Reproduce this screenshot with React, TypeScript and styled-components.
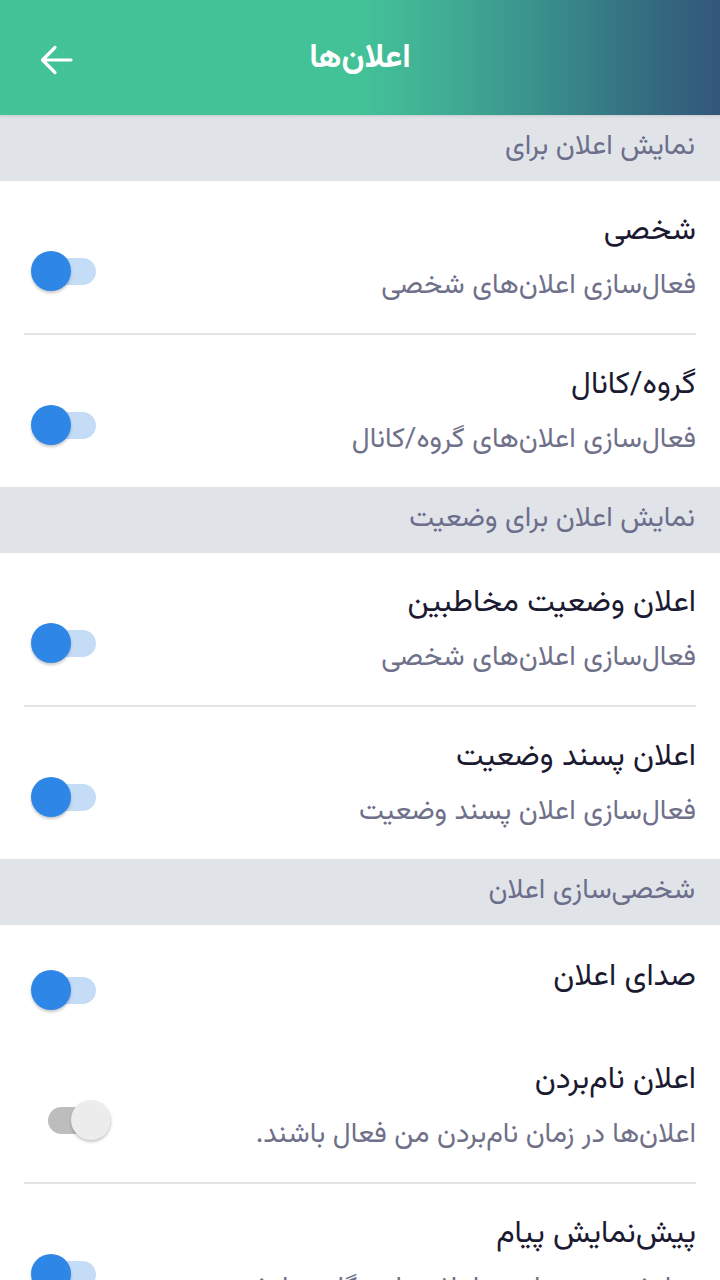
import React from "react";
import styled, { createGlobalStyle } from "styled-components";

const GlobalStyle = createGlobalStyle`
  html, body { margin: 0; padding: 0; background: #ffffff; }
  body { font-family: "Vazirmatn", "Noto Sans Arabic", "DejaVu Sans", sans-serif; overflow: hidden; }
  * { box-sizing: border-box; }
`;

const Page = styled.div`
  width: 720px;
  min-height: 1280px;
  background: #ffffff;
  direction: rtl;
`;

const Header = styled.header`
  position: relative;
  z-index: 1;
  height: 115px;
  display: flex;
  align-items: center;
  justify-content: center;
  direction: ltr;
  background: linear-gradient(90deg, #44c398 0%, #43c298 50%, #3fab93 63%, #398b8b 77%, #346e81 89%, #33567a 100%);
  box-shadow: 0 1px 3px rgba(0, 0, 0, 0.12);
`;

const BackButton = styled.button`
  position: absolute;
  left: 36px;
  top: 40px;
  width: 40px;
  height: 40px;
  padding: 0;
  border: 0;
  background: transparent;
  display: flex;
  align-items: center;
  justify-content: center;
`;

const HeaderTitle = styled.h1`
  margin: 0;
  color: #ffffff;
  font-size: 33px;
  font-weight: 700;
  direction: rtl;
  transform: translateY(1px);
`;

const SectionHeader = styled.div`
  height: 66px;
  background: #e0e4e9;
  display: flex;
  align-items: center;
  padding: 0 25px 2px;
  color: #6c6e8b;
  font-size: 28px;
`;

const Row = styled.div<{ $divider?: boolean; $compact?: boolean }>`
  display: flex;
  align-items: center;
  justify-content: space-between;
  margin: 0 24px;
  padding: 32px 0 ${(p) => (p.$compact ? "31px" : "29px")};
  border-bottom: ${(p) => (p.$divider ? "2px solid #e3e4e6" : "0")};
`;

const TextBlock = styled.div`
  display: flex;
  flex-direction: column;
  gap: 17px;
  min-width: 0;
`;

const Title = styled.div`
  color: #1b1a31;
  font-size: 31px;
  line-height: 38px;
  white-space: nowrap;
`;

const Subtitle = styled.div`
  color: #6f7089;
  font-size: 28px;
  line-height: 36px;
  white-space: nowrap;
`;

const SwitchBox = styled.div`
  position: relative;
  flex: 0 0 auto;
  width: 82px;
  height: 42px;
  margin: 12px 0 -12px 7px;
`;

const Track = styled.div<{ $on: boolean }>`
  position: absolute;
  top: 8px;
  left: ${(p) => (p.$on ? "1px" : "17px")};
  width: ${(p) => (p.$on ? "64px" : "63px")};
  height: 27px;
  border-radius: 14px;
  background: ${(p) => (p.$on ? "#c5dcf7" : "#bdbdbd")};
`;

const Thumb = styled.div<{ $on: boolean }>`
  position: absolute;
  top: 1px;
  left: ${(p) => (p.$on ? "0px" : "40px")};
  width: 40px;
  height: 40px;
  border-radius: 50%;
  background: ${(p) => (p.$on ? "#2e86e7" : "#ececec")};
  box-shadow: 0 2px 3px rgba(0, 0, 0, 0.22);
`;

const Switch = ({ on }: { on: boolean }) => (
  <SwitchBox>
    <Track $on={on} />
    <Thumb $on={on} />
  </SwitchBox>
);

type Item = { title: string; subtitle?: string; on: boolean; divider?: boolean };

const SettingRow = ({ title, subtitle, on, divider }: Item) => (
  <Row $divider={divider} $compact={!subtitle}>
    <TextBlock>
      <Title>{title}</Title>
      {subtitle && <Subtitle>{subtitle}</Subtitle>}
    </TextBlock>
    <Switch on={on} />
  </Row>
);

const ZW = "\u200c";

const sections: { header: string; items: Item[] }[] = [
  {
    header: "نمایش اعلان برای",
    items: [
      { title: "شخصی", subtitle: `فعال${ZW}سازی اعلان${ZW}های شخصی`, on: true, divider: true },
      { title: "گروه/کانال", subtitle: `فعال${ZW}سازی اعلان${ZW}های گروه/کانال`, on: true },
    ],
  },
  {
    header: "نمایش اعلان برای وضعیت",
    items: [
      { title: "اعلان وضعیت مخاطبین", subtitle: `فعال${ZW}سازی اعلان${ZW}های شخصی`, on: true, divider: true },
      { title: "اعلان پسند وضعیت", subtitle: `فعال${ZW}سازی اعلان پسند وضعیت`, on: true },
    ],
  },
  {
    header: `شخصی${ZW}سازی اعلان`,
    items: [
      { title: "صدای اعلان", on: true },
      {
        title: `اعلان نام${ZW}بردن`,
        subtitle: `اعلان${ZW}ها در زمان نام${ZW}بردن من فعال باشند.`,
        on: false,
        divider: true,
      },
      { title: `پیش${ZW}نمایش پیام`, subtitle: `نمایش متن پیام در اعلان${ZW}ها هنگام نمایش`, on: true },
    ],
  },
];

export default function App() {
  return (
    <>
      <GlobalStyle />
      <Page>
        <Header>
          <BackButton aria-label="back">
            <svg width="36" height="36" viewBox="0 0 36 36" fill="none">
              <path d="M33 18H5M17 5.5L4.5 18L17 30.5" stroke="#ffffff" strokeWidth="3.2" strokeLinecap="round" strokeLinejoin="round" />
            </svg>
          </BackButton>
          <HeaderTitle>{`اعلان${ZW}ها`}</HeaderTitle>
        </Header>
        {sections.map((s) => (
          <section key={s.header}>
            <SectionHeader>{s.header}</SectionHeader>
            {s.items.map((it) => (
              <SettingRow key={it.title} {...it} />
            ))}
          </section>
        ))}
      </Page>
    </>
  );
}
